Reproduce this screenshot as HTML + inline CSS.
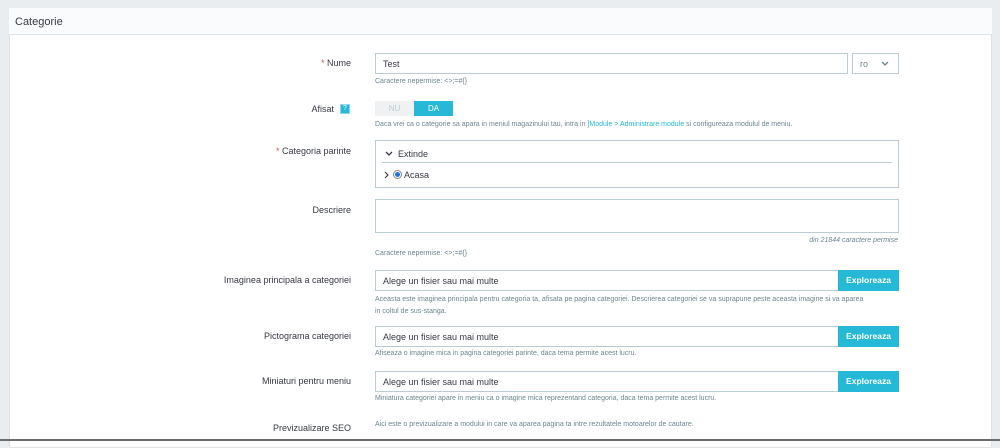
<!DOCTYPE html>
<html><head><style>
*{box-sizing:border-box;margin:0;padding:0}
body{width:1000px;height:441px;background:#eaedf0;font-family:"Liberation Sans",sans-serif;color:#363a41;position:relative;overflow:hidden}
.panel{position:absolute;left:9px;top:8px;width:983px;height:440px;background:#fff;border:1px solid #dfe3e6;border-radius:3px}
.hd{position:absolute;left:9px;top:8px;width:983px;height:27px;background:#fafbfc;border-bottom:1px solid #dde4e8;font-size:11px;padding:8px 6px;color:#363a41}
.a{position:absolute}
.lbl{position:absolute;right:649px;font-size:9px;color:#363a41;white-space:nowrap}
.req{color:#c05c50}
.inp{position:absolute;border:1px solid #bbcdd2;background:#fff;font-size:9px;padding:5px 7px;color:#363a41}
.help{position:absolute;left:375px;font-size:7px;color:#6c868e;white-space:nowrap}
.btn{position:absolute;left:838px;width:61px;height:21px;background:#25b9d7;color:#fff;font-size:8.5px;font-weight:bold;text-align:center;line-height:21px}
</style></head><body>
<div class="panel"></div>
<div class="hd">Categorie</div>

<div class="lbl" style="top:58px"><span class="req">*</span> Nume</div>
<div class="inp" style="left:375px;top:53px;width:473px;height:21px">Test</div>
<div class="inp" style="left:852px;top:53px;width:47px;height:21px;color:#6c868e">ro<svg style="position:absolute;right:9px;top:7px" width="8" height="6"><path d="M1 1l3 3 3-3" fill="none" stroke="#6c868e" stroke-width="1.3"/></svg></div>
<div class="help" style="top:78px">Caractere nepermise: &lt;&gt;;=#{}</div>

<div class="lbl" style="top:104px;right:666px">Afisat</div>
<div class="a" style="left:340px;top:104px;width:10px;height:10px;background:#25b9d7;border:1px solid #8fd8e8;color:#fff;font-size:7px;text-align:center;line-height:8px">?</div>
<div class="a" style="left:375px;top:101px;width:39px;height:15px;background:#eff1f2;color:#bbcdd2;font-size:8px;text-align:center;line-height:15px">NU</div>
<div class="a" style="left:414px;top:101px;width:39px;height:15px;background:#25b9d7;color:#fff;font-size:8px;text-align:center;line-height:15px">DA</div>
<div class="help" style="top:121px">Daca vrei ca o categorie sa apara in meniul magazinului tau, intra in <span style="color:#25b9d7">]Module &gt; Administrare module</span> si configureaza modulul de meniu.</div>

<div class="lbl" style="top:146px"><span class="req">*</span> Categoria parinte</div>
<div class="a" style="left:375px;top:140px;width:524px;height:48px;border:1px solid #bbcdd2"></div>
<div class="a" style="left:382px;top:162px;width:510px;height:1px;background:#bbcdd2"></div>
<svg class="a" style="left:385px;top:151px" width="8" height="6"><path d="M1 1l3 3 3-3" fill="none" stroke="#363a41" stroke-width="1.3"/></svg>
<div class="a" style="left:398px;top:149px;font-size:9px">Extinde</div>
<svg class="a" style="left:384px;top:171px" width="6" height="8"><path d="M1 1l3 3-3 3" fill="none" stroke="#363a41" stroke-width="1.1"/></svg>
<div class="a" style="left:393px;top:170px;width:9px;height:9px;border-radius:50%;border:1px solid #888;background:#fff"><div style="margin:1px;width:5px;height:5px;border-radius:50%;background:#1a73e8"></div></div>
<div class="a" style="left:404px;top:170px;font-size:9px">Acasa</div>

<div class="lbl" style="top:205px">Descriere</div>
<div class="a" style="left:375px;top:199px;width:524px;height:34px;border:1px solid #bbcdd2"></div>
<div class="a" style="right:102px;top:237px;font-size:7px;font-style:italic;color:#6c868e">din 21844 caractere permise</div>
<div class="help" style="top:250px">Caractere nepermise: &lt;&gt;;=#{}</div>

<div class="lbl" style="top:275px">Imaginea principala a categoriei</div>
<div class="inp" style="left:375px;top:270px;width:464px;height:21px">Alege un fisier sau mai multe</div>
<div class="btn" style="top:270px">Exploreaza</div>
<div class="help" style="top:294px;line-height:12px">Aceasta este imaginea principala pentru categoria ta, afisata pe pagina categoriei. Descrierea categoriei se va suprapune peste aceasta imagine si va aparea<br>in coltul de sus-stanga.</div>

<div class="lbl" style="top:331px">Pictograma categoriei</div>
<div class="inp" style="left:375px;top:326px;width:464px;height:21px">Alege un fisier sau mai multe</div>
<div class="btn" style="top:326px">Exploreaza</div>
<div class="help" style="top:350px">Afiseaza o imagine mica in pagina categoriei parinte, daca tema permite acest lucru.</div>

<div class="lbl" style="top:376px">Miniaturi pentru meniu</div>
<div class="inp" style="left:375px;top:371px;width:464px;height:21px">Alege un fisier sau mai multe</div>
<div class="btn" style="top:371px">Exploreaza</div>
<div class="help" style="top:395px">Miniatura categoriei apare in meniu ca o imagine mica reprezentand categoria, daca tema permite acest lucru.</div>

<div class="lbl" style="top:423px">Previzualizare SEO</div>
<div class="help" style="top:421px">Aici este o previzualizare a modului in care va aparea pagina ta intre rezultatele motoarelor de cautare.</div>
<div class="a" style="left:0;top:439px;width:1000px;height:2px;background:#6b6b6b"></div>
</body></html>
